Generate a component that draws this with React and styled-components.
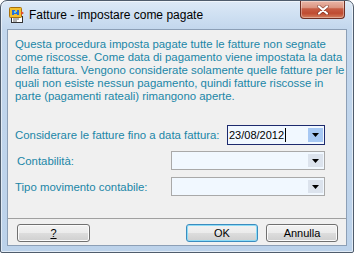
import React from "react";
import styled, { createGlobalStyle } from "styled-components";

const Global = createGlobalStyle`
  html, body { margin: 0; padding: 0; background: #ffffff; }
  body { font-family: "Liberation Sans", Arial, sans-serif; }
  #root { width: 354px; height: 253px; }
`;

const Window = styled.div`
  box-sizing: border-box;
  width: 354px;
  height: 253px;
  border: 1px solid #4f5c6c;
  border-radius: 7px 7px 2px 2px;
  background: linear-gradient(to bottom, #dde9f6 0px, #cfe0f2 14px, #c3d7ed 28px, #bcd2ea 100%);
  box-shadow: inset 0 0 0 1px rgba(255, 255, 255, 0.55);
  display: flex;
  flex-direction: column;
  overflow: hidden;
`;

const TitleBar = styled.div`
  height: 28px;
  display: flex;
  align-items: center;
  padding-left: 8px;
  flex-shrink: 0;
`;

const TitleText = styled.span`
  margin-left: 4px;
  font-size: 12px;
  color: #000;
  white-space: nowrap;
`;

const CloseButton = styled.div`
  box-sizing: border-box;
  align-self: flex-start;
  margin-left: auto;
  margin-right: 8px;
  width: 45px;
  height: 18px;
  border: 1px solid #6e2f24;
  border-top: none;
  border-radius: 0 0 4px 4px;
  background: linear-gradient(
    to bottom,
    #eab6a7 0%,
    #dc9783 38%,
    #c75e45 46%,
    #bf4b31 72%,
    #d4805f 100%
  );
  box-shadow: inset 0 0 0 1px rgba(255, 255, 255, 0.35);
  display: flex;
  align-items: center;
  justify-content: center;
`;

const Client = styled.div`
  box-sizing: border-box;
  flex: 1;
  margin: 0 6px 6px 6px;
  border: 1px solid #8c9fb6;
  background: #f0f0f0;
  display: flex;
  flex-direction: column;
`;

const Description = styled.p`
  box-sizing: border-box;
  margin: 0;
  height: 95px;
  padding: 8px 0 0 7px;
  font-size: 11.4px;
  line-height: 13px;
  white-space: nowrap;
  color: #1a86a7;
`;

const Row = styled.div`
  display: flex;
  align-items: center;
  justify-content: space-between;
  height: ${(p) => p.$h}px;
  margin-top: ${(p) => p.$mt || 0}px;
  padding: 0 21px 0 7px;
`;

const Label = styled.span`
  font-size: 11.4px;
  color: #1a86a7;
  padding-left: ${(p) => p.$indent || 0}px;
  white-space: nowrap;
`;

const Field = styled.div`
  box-sizing: border-box;
  width: ${(p) => p.$w}px;
  height: 100%;
  border: 1px solid ${(p) => (p.$focused ? "#1d2a6e" : "#a9a9a9")};
  background: #f1f8ff;
  display: flex;
  align-items: center;
  padding-left: 1px;
`;

const FieldText = styled.span`
  font-size: 11px;
  color: #000;
  line-height: 14px;
  border-right: 1px solid #000;
  padding-right: 1px;
`;

const DropButton = styled.div`
  margin-left: auto;
  margin-right: 1px;
  width: 15px;
  align-self: stretch;
  margin-top: 2px;
  margin-bottom: 2px;
  background: ${(p) => (p.$active ? "#a7c8f3" : "#dce3ed")};
  display: flex;
  align-items: center;
  justify-content: center;
`;

const Separator = styled.div`
  height: 1px;
  margin-top: 22px;
  background: #a0a0a0;
`;

const ButtonBar = styled.div`
  display: flex;
  align-items: center;
  margin-top: 5px;
  padding: 0 8px 0 9px;
  gap: 8px;
`;

const Button = styled.div`
  box-sizing: border-box;
  width: ${(p) => p.$w}px;
  height: 18px;
  border: 1px solid ${(p) => (p.$default ? "#3b8cbf" : "#707070")};
  border-radius: 3px;
  background: linear-gradient(to bottom, #f2f2f2 0%, #ebebeb 50%, #dddddd 50%, #cfcfcf 100%);
  box-shadow: inset 0 0 0 1px ${(p) => (p.$default ? "#8ddcf6" : "#fbfbfb")};
  display: flex;
  align-items: center;
  justify-content: center;
  font-size: 11px;
  color: #000;
  margin-right: ${(p) => (p.$push ? "auto" : "0")};
`;

const Underlined = styled.span`
  text-decoration: underline;
`;

const Arrow = () => (
  <svg width="7" height="4" viewBox="0 0 7 4">
    <polygon points="0,0 7,0 3.5,4" fill="#000" />
  </svg>
);

const AppIcon = () => (
  <svg width="16" height="16" viewBox="0 0 16 16">
    <rect x="2.5" y="9.5" width="11" height="6" fill="#fff" stroke="#333" />
    <path d="M4 12h6M4 14h4" stroke="#666" strokeWidth="1" />
    <rect x="0.5" y="0.5" width="12" height="10" rx="1" fill="#f2bf2e" stroke="#a9700a" />
    <path d="M3 3h3v2h2V3h2v5H8V7H5v1H3z" fill="#2a6fd6" />
    <rect x="5" y="4" width="2" height="2" fill="#5fd0f0" />
    <path d="M12 4l3 2-3 2z" fill="#e04a2a" />
  </svg>
);

const CloseGlyph = () => (
  <svg width="12" height="10" viewBox="0 0 12 10">
    <path d="M2 1.5L10 8.5M10 1.5L2 8.5" stroke="#5a1d12" strokeWidth="3.6" strokeLinecap="round" opacity="0.55" />
    <path d="M2 1.5L10 8.5M10 1.5L2 8.5" stroke="#ffffff" strokeWidth="2.2" strokeLinecap="round" />
  </svg>
);

export default function App() {
  return (
    <>
      <Global />
      <Window>
        <TitleBar>
          <AppIcon />
          <TitleText>Fatture - impostare come pagate</TitleText>
          <CloseButton>
            <CloseGlyph />
          </CloseButton>
        </TitleBar>
        <Client>
          <Description>
            Questa procedura imposta pagate tutte le fatture non segnate
            <br />
            come riscosse. Come data di pagamento viene impostata la data
            <br />
            della fattura. Vengono considerate solamente quelle fatture per le
            <br />
            quali non esiste nessun pagamento, quindi fatture riscosse in
            <br />
            parte (pagamenti rateali) rimangono aperte.
          </Description>
          <Row $h={20}>
            <Label>Considerare le fatture fino a data fattura:</Label>
            <Field $w={98} $focused>
              <FieldText>23/08/2012</FieldText>
              <DropButton $active>
                <Arrow />
              </DropButton>
            </Field>
          </Row>
          <Row $h={19} $mt={6}>
            <Label $indent={2}>Contabilità:</Label>
            <Field $w={154}>
              <DropButton>
                <Arrow />
              </DropButton>
            </Field>
          </Row>
          <Row $h={19} $mt={7}>
            <Label>Tipo movimento contabile:</Label>
            <Field $w={154}>
              <DropButton>
                <Arrow />
              </DropButton>
            </Field>
          </Row>
          <Separator />
          <ButtonBar>
            <Button $w={73} $push>
              <Underlined>?</Underlined>
            </Button>
            <Button $w={72} $default>OK</Button>
            <Button $w={72}>Annulla</Button>
          </ButtonBar>
        </Client>
      </Window>
    </>
  );
}
